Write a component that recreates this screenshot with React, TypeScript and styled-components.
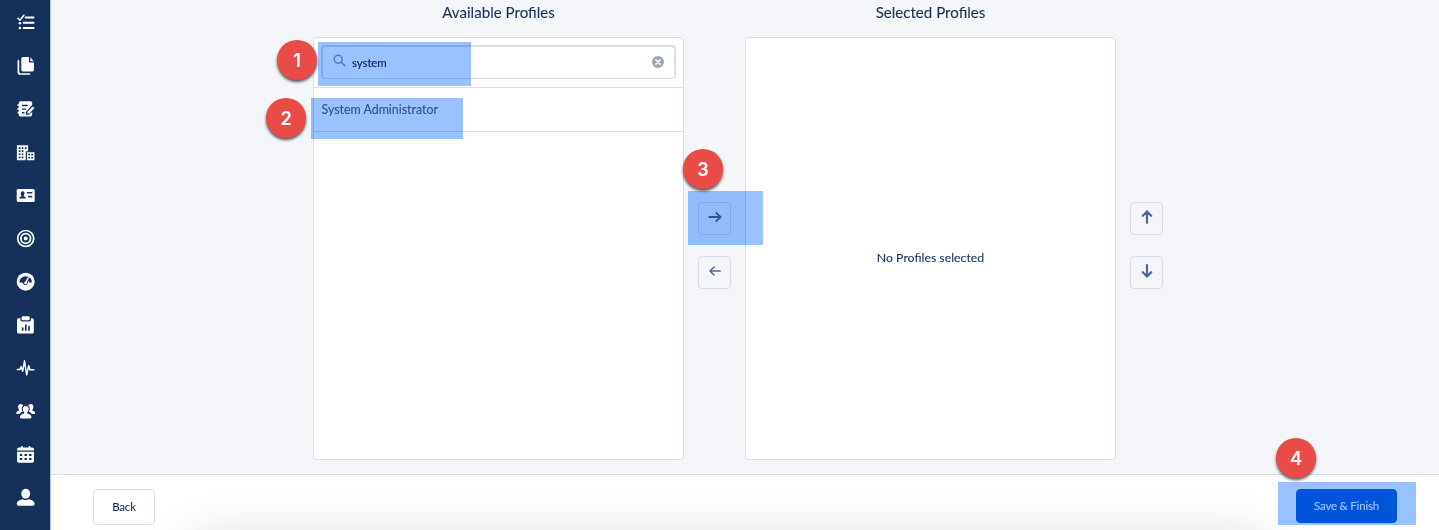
import React from "react";
import styled, { createGlobalStyle } from "styled-components";

const GlobalStyle = createGlobalStyle`
  * { box-sizing: border-box; }
  html, body { margin: 0; overflow: hidden; }
  body { font-family: Lato, "Open Sans", sans-serif; color: #16325c; background: #f4f6f9; -webkit-text-stroke: 0.1px; }
  button, input { font: inherit; color: inherit; }
`;

const Page = styled.div`
  position: relative;
  display: flex;
  width: 1439px;
  height: 530px;
  overflow: hidden;
  isolation: isolate;
  background: #f4f6fa;
`;

const Sidebar = styled.nav`
  display: flex;
  flex-direction: column;
  align-items: center;
  gap: 23.2px;
  width: 51px;
  flex: none;
  padding: 12.4px 0 0 1px;
  background: #15305b;
  border-right: 1px solid #b9c2d4;
`;

const NavIcon = styled.svg`
  display: block;
  flex: none;
  width: 20px;
  height: 20px;
  overflow: visible;
  fill: #fff;
  stroke-linecap: round;
  stroke-linejoin: round;
`;

const Main = styled.main`
  display: flex;
  flex-direction: column;
  flex: 1;
  min-width: 0;
`;

const Content = styled.section`
  display: flex;
  align-items: flex-start;
  gap: 14px;
  height: 474px;
  padding: 2px 0 0 262px;
`;

const Column = styled.div`
  display: flex;
  flex-direction: column;
  width: 371px;
`;

const Title = styled.h2`
  margin: 0;
  height: 35px;
  font-size: 15.1px;
  font-weight: 400;
  line-height: 20px;
  text-align: center;
`;

const Panel = styled.div<{ $center?: boolean }>`
  display: flex;
  flex-direction: column;
  justify-content: ${(p) => (p.$center ? "center" : "flex-start")};
  height: 423px;
  background: #fff;
  border: 1px solid #d8dde8;
  border-radius: 4px;
`;

const SearchArea = styled.div`
  height: 50px;
  padding: 7px 7px 0;
  border-bottom: 1px solid #d8dde8;
`;

const SearchField = styled.label`
  display: flex;
  align-items: center;
  height: 34px;
  padding: 0 10px;
  border: 1px solid #d8dde8;
  border-top-width: 2px;
  border-right-width: 2px;
  border-left-width: 2px;
  border-radius: 4px;
`;

const SearchIcon = styled.svg`
  width: 13px;
  height: 13px;
  margin: -4px 6px 0 0;
  fill: none;
  stroke: #8b99ad;
  stroke-width: 1.4;
  stroke-linecap: round;
`;

const SearchInput = styled.input`
  flex: 1;
  min-width: 0;
  padding: 0;
  border: 0;
  outline: 0;
  background: transparent;
  font-size: 11.5px;
  letter-spacing: -0.1px;
  color: #0b2559;
`;

const ClearIcon = styled.svg`
  width: 12px;
  height: 12px;
  margin-top: -2px;
`;

const Option = styled.div`
  height: 44px;
  padding: 13px 7.5px 0;
  border-bottom: 1px solid #d8dde8;
  font-size: 12.4px;
  line-height: 17px;
  color: #54698d;
`;

const EmptyText = styled.p`
  margin: 18px 0 0;
  text-align: center;
  font-size: 12.3px;
  line-height: 18px;
`;

const Controls = styled.div`
  display: flex;
  flex-direction: column;
  gap: 21px;
  padding-top: 200px;
`;

const IconButton = styled.button`
  display: flex;
  justify-content: center;
  width: 33px;
  height: 33px;
  padding: 7px 0 0;
  background: #f4f6fa;
  border: 1px solid #d8dde6;
  border-radius: 4px;
`;

const Arrow = styled.svg<{ $turn: number; $weight: number }>`
  width: 14px;
  height: 14px;
  fill: none;
  stroke: #506794;
  stroke-width: ${(p) => p.$weight};
  stroke-linecap: round;
  stroke-linejoin: round;
  transform: rotate(${(p) => p.$turn}deg);
`;

const Footer = styled.footer`
  position: relative;
  display: flex;
  justify-content: space-between;
  align-items: flex-start;
  height: 56px;
  padding: 14px 42px 0;
  overflow: hidden;
  background: #fff;
  border-top: 1px solid #d8dde8;

  &::after {
    content: "";
    position: absolute;
    top: 70px;
    left: 145px;
    right: 175px;
    height: 60px;
    box-shadow: 0 0 56px rgba(0, 0, 0, 0.2);
  }
`;

const FooterButton = styled.button<{ $primary?: boolean }>`
  width: ${(p) => (p.$primary ? 101 : 62)}px;
  height: ${(p) => (p.$primary ? 34 : 36)}px;
  padding: 0 0 1px;
  border: 1px solid ${(p) => (p.$primary ? "#006cda" : "#d8dde8")};
  border-radius: 4px;
  background: ${(p) => (p.$primary ? "#006eda" : "#fff")};
  color: ${(p) => (p.$primary ? "#fff" : "#16325c")};
  font-size: 11.5px;
  letter-spacing: -0.2px;
`;

const Highlight = styled.div<{ $x: number; $y: number; $w: number; $h: number }>`
  position: absolute;
  left: ${(p) => p.$x}px;
  top: ${(p) => p.$y}px;
  width: ${(p) => p.$w}px;
  height: ${(p) => p.$h}px;
  background: #98c3ff;
  mix-blend-mode: multiply;
`;

const Step = styled.div<{ $x: number; $y: number }>`
  position: absolute;
  left: ${(p) => p.$x}px;
  top: ${(p) => p.$y}px;
  width: 40px;
  height: 40px;
  border-radius: 50%;
  background: #e94b46;
  box-shadow: 0 2px 3px rgba(0, 0, 0, 0.65);
  color: #fff;
  font: 600 18px/41px Inter, "Liberation Sans", sans-serif;
  text-align: center;
`;

const navIcons: React.ReactNode[] = [
  <g transform="translate(0 .2)">
    <path d="M2.2 6l2 2 4-5" fill="none" stroke="#fff" strokeWidth="1.5" />
    <path d="M10 5.3h7.8M8 10.5h9.8M8 15.8h9.8" stroke="#fff" strokeWidth="2.1" />
    <circle cx="4.2" cy="11" r="1.3" /><circle cx="4.2" cy="15.8" r="1.3" />
  </g>,
  <>
    <path d="M7.2 1h6v4.6c0 .6.4 1 1 1h4V14q0 1.4-1.4 1.4H7.2Q5.6 15.4 5.6 14V2.6Q5.6 1 7.2 1Z" />
    <path d="M14.6 1.2l3.4 4h-3.4Z" />
    <path d="M2.7 4.7V16q0 2 2 2H13.8" fill="none" stroke="#fff" strokeWidth="1.7" />
  </>,
  <>
    <path fillRule="evenodd" d="M5 2.2h10q1.5 0 1.5 1.5V6L10.2 13v2.7h3L16.5 13v2.2q0 2.4-2 2.4H5q-2 0-2-2v-1H1.8v-1.8H3v-2H1.8V9H3V7H1.8V5.2H3V4.1Q3 2.2 5 2.2ZM6.2 5.7v1.5h6V5.7ZM6.2 9.4v1.4h4.2V9.4ZM6.2 13v1.4h2.6V13Z" />
    <path d="M11.6 14.8l.6-2.2 4.8-5.2 1.8 1.6-4.9 5.2Z" />
  </>,
  <g transform="translate(0 .6)">
    <path d="M1.2 2.7h11.2v6H10v9H1.2Z" />
    <path d="M11.2 9.7h7.5v8h-7.5Z" />
    <path transform="translate(0 .5)" fill="#15305b" d="M3 4.1h1.8v1.7H3Zm3.1 0h1.6v1.7H6.1Zm3 0h1.8v1.7H9.1ZM3 7.2h1.8v1.7H3Zm3.1 0h1.6v1.7H6.1ZM3 10.3h1.8V12H3Zm3.1 0h1.6V12H6.1ZM3 13.4h1.8v1.8H3Zm3.1 0h1.6v1.8H6.1ZM12.6 10.7h1.7v1.6h-1.7Zm3 0h1.7v1.6h-1.7Zm-3 3.1h1.7v1.7h-1.7Zm3 0h1.7v1.7h-1.7Z" />
  </g>,
  <>
    <rect x="1" y="4" width="18" height="13" rx="1.5" />
    <g fill="#15305b" transform="translate(0 .5)"><ellipse cx="6.9" cy="8" rx="1.9" ry="2.2" /><path d="M3.6 13q0-2 2.2-2.3V9h2.2v1.7q2.2.3 2.2 2.3ZM11.3 6.5h5.3v1.6h-5.3ZM12.5 10.2h4.1v1.7h-4.1Z" /></g>
  </>,
  <g transform="translate(0 .5)">
    <circle cx="10" cy="10" r="8" fill="none" stroke="#fff" strokeWidth="1.7" />
    <circle cx="10" cy="10" r="4.8" fill="none" stroke="#fff" strokeWidth="1.8" />
    <circle cx="10" cy="10" r="2" />
  </g>,
  <g transform="translate(0 -.3)">
    <circle cx="10" cy="10" r="9" />
    <path d="M3.7 10.8A6.3 6.3 0 0 1 16.3 10.8h-2.7L12.8 9 11.8 12A2.5 2.5 0 0 1 7.5 12L6.5 10.8Z" fill="#15305b" />
    <path d="M10 11.1l2.4-4.8" stroke="#fff" strokeWidth="1.5" />
    <circle cx="9.8" cy="11.3" r="1.3" />
  </g>,
  <>
    <path d="M2.7 3.2h2v1.6q0 1.7 1.7 1.7h7.2q1.7 0 1.7-1.7V3.2h1.1q1.7 0 1.7 1.7v12q0 1.7-1.7 1.7H3q-1.7 0-1.7-1.7v-12q0-1.7 1.4-1.7Z" />
    <rect x="6" y="1.2" width="8" height="4" rx="1.2" />
    <path stroke="#15305b" strokeWidth="1.7" d="M6.9 13v2M10.1 10.2V15M13.3 11.7V15" />
  </>,
  <path d="M1.6 11.5h2.6L5.5 8.6 7 13.2 8.8 2.8l2.2 14 2-9.2 1.2 4.2h4" fill="none" stroke="#fff" strokeWidth="1.45" />,
  <g transform="translate(0 .4)">
    <path d="M4.8 2.7q2.2 0 2.7 1.5-1.6 1.2-1.5 3.5.1 1.6.9 2.4-1.9.8-3 2.5H1.2Q0 12 .8 10.6q.7-.8 2.4-1.4V8Q2.3 7.2 2.3 5.2q.1-2.3 2.5-2.5ZM15.2 2.7q-2.2 0-2.7 1.5 1.6 1.2 1.5 3.5-.1 1.6-.9 2.4 1.9.8 3 2.5h2.7q1.2-.6.4-2-.7-.8-2.4-1.4V8q.9-.8.9-2.8-.1-2.3-2.5-2.5Z" />
    <path d="M10 4.5q3 .1 3 3.3 0 2-1.5 3.2v1q3.8 1 4.3 3.3.2 1.8-1.4 1.8H5.6q-1.6 0-1.4-1.8Q4.7 13 8.5 12v-1Q7 9.8 7 7.8q0-3.2 3-3.3Z" />
  </g>,
  <g transform="translate(0 .4)">
    <path d="M3.2 3.1h2V2.7q0-1.1 1-1.1t1 1.1v.4h5.6v-.4q0-1.1 1-1.1t1 1.1v.4h1.6q1.9 0 1.9 1.8v1.3H1.4V4.9q0-1.8 1.8-1.8ZM1.4 7.3h16.9v9.4q0 1.7-1.7 1.7H3.1q-1.7 0-1.7-1.7Z" />
    <path fill="#15305b" d="M4.1 9.7h2.5v2H4.1Zm4.7 0h2.5v2H8.8Zm4.6 0h2.4v2h-2.4ZM4.1 13.6h2.5v2.1H4.1Zm4.7 0h2.5v2.1H8.8Zm4.6 0h2.4v2.1h-2.4Z" />
  </g>,
  <g transform="translate(0 .6)">
    <ellipse cx="10" cy="6.1" rx="4.4" ry="5" />
    <path d="M1 16.2q0-3 5-4.4 1.2-.3 1.8.1 2.2 1.2 4.4 0 .6-.4 1.8-.1 5 1.4 5 4.4 0 2-1.7 2H2.7q-1.7 0-1.7-2Z" />
  </g>,
];

const ArrowGlyph = ({ turn = 0, weight = 1.8, small = false }: { turn?: number; weight?: number; small?: boolean }) => (
  <Arrow viewBox="0 0 14 14" $turn={turn} $weight={weight}>
    <path d={small ? "M1.8 7h10.2M8 3l4 4-4 4" : "M1.2 7h11.4M8.2 2.8l4.4 4.2-4.4 4.2"} />
  </Arrow>
);

export default function App() {
  return (
    <Page>
      <GlobalStyle />
      <Sidebar>
        {navIcons.map((icon, index) => (
          <NavIcon key={index} viewBox="0.3 0 20 20">{icon}</NavIcon>
        ))}
      </Sidebar>
      <Main>
        <Content>
          <Column>
            <Title>Available Profiles</Title>
            <Panel>
              <SearchArea>
                <SearchField>
                  <SearchIcon viewBox="0 0 13 13"><circle cx="5.2" cy="5.2" r="4" /><path d="M8.3 8.3l3.5 3.5" /></SearchIcon>
                  <SearchInput defaultValue="system" />
                  <ClearIcon viewBox="0 0 12 12">
                    <circle cx="6" cy="6" r="6" fill="#9ca7b5" />
                    <path d="M3.9 3.9l4.2 4.2M8.1 3.9L3.9 8.1" stroke="#fff" strokeWidth="1.5" strokeLinecap="round" />
                  </ClearIcon>
                </SearchField>
              </SearchArea>
              <Option>System Administrator</Option>
            </Panel>
          </Column>
          <Controls>
            <IconButton><ArrowGlyph /></IconButton>
            <IconButton><ArrowGlyph turn={180} weight={1.5} small /></IconButton>
          </Controls>
          <Column>
            <Title>Selected Profiles</Title>
            <Panel $center><EmptyText>No Profiles selected</EmptyText></Panel>
          </Column>
          <Controls>
            <IconButton><ArrowGlyph turn={-90} weight={2.2} /></IconButton>
            <IconButton><ArrowGlyph turn={90} weight={2.2} /></IconButton>
          </Controls>
        </Content>
        <Footer>
          <FooterButton>Back</FooterButton>
          <FooterButton $primary>Save &amp; Finish</FooterButton>
        </Footer>
      </Main>
      <Highlight $x={318} $y={42} $w={153} $h={43.5} />
      <Highlight $x={311} $y={98} $w={151.5} $h={40.5} />
      <Highlight $x={688.4} $y={190.5} $w={75} $h={54.9} />
      <Highlight $x={1278.4} $y={481.5} $w={138} $h={43.9} />
      <Step $x={277} $y={40}>1</Step>
      <Step $x={266} $y={98}>2</Step>
      <Step $x={683} $y={149}>3</Step>
      <Step $x={1276} $y={438}>4</Step>
    </Page>
  );
}
